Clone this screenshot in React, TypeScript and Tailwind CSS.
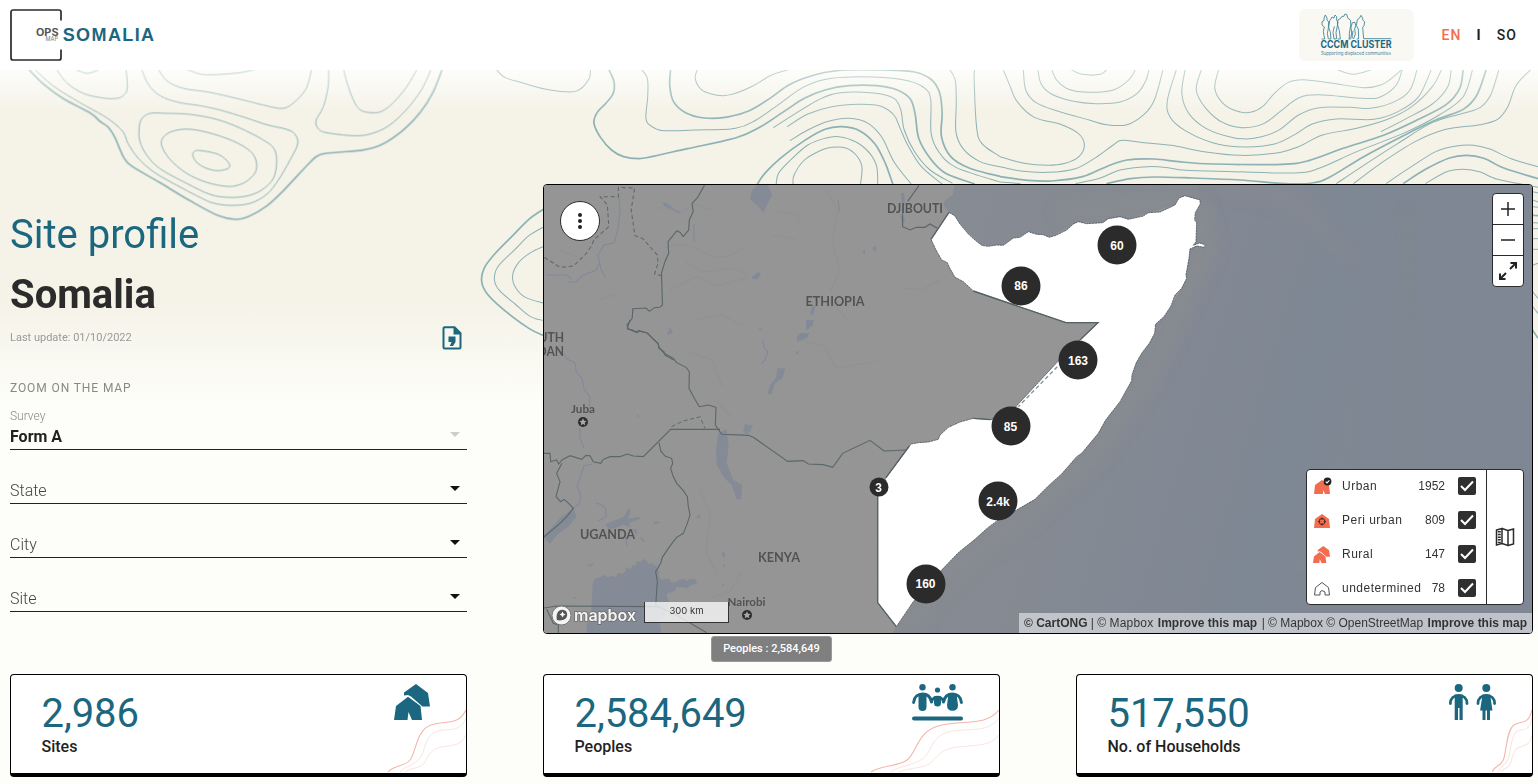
import React from "react";

/* Turns "x,y x,y ..." into a smooth path (Catmull-Rom to Bezier). */
function smooth(points: string): string {
  const p = points.trim().split(/\s+/).map((s) => s.split(",").map(Number));
  const closed = p.length > 2 && p[0][0] === p[p.length - 1][0] && p[0][1] === p[p.length - 1][1];
  let d = `M${p[0][0]} ${p[0][1]}`;
  for (let i = 0; i < p.length - 1; i++) {
    const a = p[i - 1] ?? (closed ? p[p.length - 2] : p[i]);
    const b = p[i];
    const c = p[i + 1];
    const e = p[i + 2] ?? (closed ? p[1] : c);
    d += `C${b[0] + (c[0] - a[0]) / 6} ${b[1] + (c[1] - a[1]) / 6} ${c[0] - (e[0] - b[0]) / 6} ${c[1] - (e[1] - b[1]) / 6} ${c[0]} ${c[1]}`;
  }
  return d;
}

type Line = [string, number];

const westLines: Line[] = [
  ["84,206 130,252 190,296 272,340 300,364 325,382 345,413 370,470 395,498 480,548 570,602 655,647 708,658 745,650 800,618 850,572 930,487 960,464 1010,457 1090,450 1145,434 1210,390 1260,338 1300,275 1327,206", 5],
  ["102,206 160,258 240,308 310,347 350,376 372,400 385,432 415,475 460,515 520,550 600,592 640,609 690,616 750,610 800,583 835,540 870,480 893,432 885,403 860,388 800,374 740,354 660,330 600,317 535,307 480,287 445,253 424,206", 3],
  ["168,206 200,248 250,280 310,294 350,295 372,285 382,262 378,206", 3],
  ["230,210 262,220 295,210", 3],
  ["474,206 500,242 550,265 630,277 730,300 790,315 850,325 890,300 920,262 935,206", 3],
  ["560,208 600,222 640,224 720,218 765,208", 3],
  ["986,206 984,262 970,320 948,362 955,386 980,398 1060,407 1110,402 1165,378 1220,328 1265,268 1294,206", 3],
  ["1030,206 1044,258 1065,310 1085,332 1115,338 1145,334 1180,308 1220,260 1252,206", 3],
  ["417,390 424,358 450,340 500,340 570,343 650,358 720,384 790,420 822,446 830,485 820,535 785,570 740,588 685,592 630,583 560,550 480,506 440,465 420,425 417,390", 3],
  ["484,432 500,402 545,388 600,392 680,415 740,445 766,475 768,512 745,540 715,555 680,559 620,547 560,520 510,478 484,432", 3],
  ["578,465 585,453 605,452 655,463 685,487 686,504 655,512 620,505 590,487 578,465", 3],
];

const centerLines: Line[] = [
  ["430,24 447,65 445,100 425,128 398,158 389,190 408,232 440,270 475,290 520,296 560,289 660,266 800,234 870,202 940,155 1000,115 1060,90 1130,77 1210,77 1270,90 1308,118 1322,165 1332,235 1365,295 1410,340 1495,372", 5],
  ["612,24 609,75 620,125 655,158 710,174 770,172 840,152 900,115 960,72 1040,42 1120,30 1230,30 1320,36 1370,60 1393,100 1400,160 1398,230 1425,290 1480,325 1568,349", 5],
  ["103,26 130,52 180,68 250,88 300,95 342,92 374,58 379,26", 3],
  ["525,26 544,55 545,110 540,175 555,198 590,212 680,210 800,205 860,180 930,130 1000,80 1080,55 1200,51 1300,62 1350,85 1367,120 1368,220 1390,275 1440,322 1568,366", 3],
  ["690,26 683,55 700,88 730,102 765,107 800,100 850,78 905,45 960,27", 3],
  ["910,203 960,170 1040,120 1100,99 1200,99 1260,115 1280,150 1290,210 1320,275 1365,330 1430,370", 3],
  ["950,200 1010,162 1080,140 1160,133 1220,138 1260,165 1278,205 1300,255 1340,320 1400,372", 3],
  ["958,242 1010,210 1070,184 1130,175 1185,190 1225,232 1260,305 1310,372", 3],
  ["863,373 885,340 930,295 1000,242 1060,208 1110,200 1160,212 1205,252 1235,310 1257,373", 5],
  ["918,373 925,340 960,300 1010,255 1060,235 1100,230 1150,246 1190,280 1210,320 1213,373", 3],
  ["967,373 970,345 1000,300 1050,270 1080,262 1120,264 1150,285 1167,320 1163,373", 3],
  ["1420,26 1438,60 1441,130 1440,215 1460,265 1510,305 1568,320", 3],
  ["1495,26 1493,60 1500,200 1515,250 1568,290", 3],
  ["245,446 200,478 150,530 100,583 70,625 63,665 80,703 130,752 200,805 245,828", 5],
  ["245,500 200,527 160,568 110,620 100,660 115,692 160,732 205,770 245,782", 3],
  ["245,558 205,578 170,608 153,645 160,680 190,712 245,730", 3],
];

const eastLines: Line[] = [
  ["8,206 28,255 50,305 100,352 180,374 230,402 246,436 230,470 190,490 140,496 70,490 0,470", 3],
  ["68,206 75,270 105,308 170,334 260,360 310,374 370,374 420,343 450,300 476,206", 3],
  ["110,206 120,252 150,282 210,303 280,311 350,306 400,280 425,242 435,206", 3],
  ["150,206 165,240 200,268 260,277 330,270 375,240 396,206", 3],
  ["205,208 240,223 292,223 312,208", 3],
  ["0,500 60,513 140,517 220,506 280,472 330,435 355,421 420,428 500,436 600,456 700,466 800,460 870,440 940,405 1040,385 1130,358 1200,320 1260,260 1288,206", 3],
  ["0,530 80,541 150,543 240,530 310,500 370,480 450,477 520,485 620,492 820,493 900,482 1000,445 1120,405 1220,358 1300,314 1340,265 1350,206", 5],
  ["0,546 60,551", 3],
  ["220,551 290,535 350,510 430,500 490,503 540,511 680,515 860,519 930,505 1040,455 1180,398 1280,345 1350,290 1378,206", 3],
  ["310,551 380,536 450,531 560,534 700,540 830,551 910,549 960,532 1060,470 1170,410 1270,360 1350,328 1390,285 1418,206", 5],
  ["515,206 488,300 495,350 540,392 620,428 710,441 800,432 860,403 910,372 980,357 1090,358 1160,335 1220,290 1258,206", 3],
  ["540,206 530,280 550,340 600,385 680,413 740,415 810,392 870,345 930,323 1020,322 1080,325 1150,305 1195,270 1216,206", 3],
  ["588,206 572,270 600,325 650,368 710,383 770,370 820,332 870,294 930,284 1060,295 1110,290 1155,255 1173,206", 3],
  ["638,206 626,265 650,310 690,333 730,337 765,320 800,280 840,247 885,239 970,250 1060,263 1110,255 1145,232 1173,206", 3],
  ["980,208 1030,223 1085,208", 3],
  ["1315,206 1305,260 1260,312 1180,358 1110,395", 3],
  ["980,551 1060,496 1160,430 1260,368 1350,340 1400,322 1430,285 1455,206", 3],
  ["1030,551 1110,490 1210,425 1300,388 1400,374 1450,358 1480,320 1505,255 1550,206", 3],
  ["1125,551 1190,506 1270,455 1330,438 1380,436 1430,448 1490,476 1568,500", 3],
  ["1175,551 1240,508 1310,474 1360,466 1410,475 1470,505 1568,536", 5],
  ["1240,551 1300,516 1350,508 1400,516 1450,538 1568,562", 3],
  ["1552,575 1568,579", 3],
  ["1552,600 1568,606", 3],
  ["1552,620 1568,622", 3],
  ["1552,646 1568,647", 5],
  ["1552,668 1568,669", 3],
  ["1552,686 1568,686", 3],
  ["1552,716 1568,716", 3],
  ["1552,748 1568,748", 3],
  ["1552,796 1568,790", 3],
  ["1552,875 1568,895", 3],
  ["1552,920 1568,940", 3],
  ["1552,990 1568,1015", 5],
];

function Contours() {
  const groups: [Line[], string][] = [
    [westLines, "scale(.33333)"],
    [centerLines, "translate(460 60) scale(.34439 .33333)"],
    [eastLines, "translate(1000 0) scale(.34311 .33333)"],
  ];
  return (
    <svg className="absolute left-0 top-0 h-[784px] w-[1538px]" viewBox="0 0 1538 784" fill="none">
      <defs>
        <linearGradient id="fade" gradientUnits="userSpaceOnUse" x1="0" y1="70" x2="0" y2="125">
          <stop offset="0" stopColor="#fff" stopOpacity=".5" />
          <stop offset="1" stopColor="#fff" />
        </linearGradient>
        <mask id="soft" maskUnits="userSpaceOnUse" x="0" y="70" width="1538" height="714">
          <rect x="0" y="70" width="1538" height="714" fill="url(#fade)" />
        </mask>
      </defs>
      <g mask="url(#soft)" stroke="#8db1b5">
        {groups.map(([lines, transform]) => (
          <g key={transform} transform={transform}>
            {lines.map(([pts, w]) => (
              <path key={pts} d={smooth(pts)} strokeWidth={w} />
            ))}
          </g>
        ))}
      </g>
    </svg>
  );
}

const somalia =
  "267,97 285,108 300,132 325,162 345,180 365,196 385,199 410,195 430,196 460,174 480,172 505,155 530,163 550,164 568,172 590,165 620,150 640,132 655,125 680,131 728,128 745,116 780,110 805,118 850,108 865,98 900,96 945,75 957,54 975,47 1020,60 1021,72 1006,98 1004,120 1010,128 1008,185 1000,196 1018,189 1036,194 1032,202 1010,198 990,207 987,235 978,285 980,295 965,325 945,345 933,378 912,410 887,432 884,460 868,490 845,520 828,550 816,585 815,602 780,665 737,720 715,760 665,820 650,830 605,882 565,918 525,958 470,990 412,1022 380,1046 345,1078 295,1118 245,1170 160,1265 109,1340 53,1268 53,945 78,893 153,792 175,788 205,786 235,778 240,765 265,742 300,726 340,715 392,719 450,700 475,672 590,548 660,480 714,428 618,428 340,333 310,305 285,292 268,262 262,248 245,240 228,210 213,178";

const sea =
  "283,0 283,20 278,45 255,60 250,75 267,97 285,108 300,132 365,196 430,196 505,155 568,172 655,125 728,128 805,118 865,98 945,75 975,47 1020,60 1006,98 1010,128 1008,185 990,207 978,285 965,325 933,378 887,432 868,490 828,550 815,602 737,720 665,820 565,918 470,990 380,1046 295,1118 245,1170 160,1265 109,1340 90,1370 2100,1370 2100,0";

function MapDrawing() {
  return (
    <svg className="absolute inset-0 h-full w-full" viewBox="544 185 988 448" preserveAspectRatio="none">
      <defs>
        <linearGradient id="sea" x1="0" y1="0.3" x2="1" y2="0.5">
          <stop offset="0" stopColor="#878b92" />
          <stop offset=".42" stopColor="#838993" />
          <stop offset=".62" stopColor="#7e8794" />
          <stop offset="1" stopColor="#7e8793" />
        </linearGradient>
        <filter id="haze" x="-30%" y="-30%" width="160%" height="160%">
          <feGaussianBlur stdDeviation="22" />
        </filter>
        <clipPath id="seaClip">
          <polygon points={sea} />
        </clipPath>
      </defs>
      <rect x="544" y="185" width="988" height="448" fill="#959595" />

      {/* relief */}
      <g fill="none" stroke="#8e8e8e" strokeWidth="1.6" opacity=".4" strokeLinecap="round">
        <path d="M660 208l22 4 12-8 18 6M665 248q20-8 38 4t40-4M686 262l18 10 30-4 16 8M670 290l28-14 18 10 30-8M696 320l26-6 20 12M826 190l12 20-6 30 8 30-10 22M800 340l24 6 12 22 40-6M830 300l16 18M905 288l16 2 20-10M690 352l22 8 10 26M716 400l14 16M700 490l10 24-4 40 12 20M742 572l-12 20-20 6M772 235l24 4M776 212l20 2 6 12M560 250l20 8M600 300l16-6" />
      </g>

      <g transform="translate(860 180) scale(.33333)">
        <polygon points={sea} fill="url(#sea)" />
        <g clipPath="url(#seaClip)">
          <polyline points="600,100 1000,60 1040,200 950,400 850,600 700,820 500,1000 300,1150 120,1350" fill="none" stroke="#898b90" strokeWidth="60" filter="url(#haze)" opacity=".8" />
          <polyline points="1060,0 1300,60 1500,260" fill="none" stroke="#898b90" strokeWidth="50" filter="url(#haze)" opacity=".45" />
          <polyline points="1480,620 1440,900 1300,1200" fill="none" stroke="#858b90" strokeWidth="60" filter="url(#haze)" opacity=".25" />
          <polyline points="1640,100 1620,500 1660,860" fill="none" stroke="#84898f" strokeWidth="60" filter="url(#haze)" opacity=".3" />
        </g>
      </g>

      {/* lakes and rivers */}
      <g fill="#858b96">
        <path d="M752 190l6-5h10l4 10-5 10-4 8-4-6-9-8zM670 327l-3 8 6-2z" />
        <g transform="translate(540 320) scale(.33333)">
          <path d="M535 340L560 328 566 380 560 430 580 480 607 495 603 538 590 538 575 495 550 470 530 435 528 390zM610 335l5-25 12 8 12-6-8 22-12 8zM712 145l24 0-8 30-22 14-12 34-12 0 8-28 18-22zM770 50l12-12 26 4-14 14-22 10zM808 0l14 0-6 22-10-4zM768 94l8 0-2 10-6-2z" />
          <path d="M10 650L60 595 100 565 110 590 85 620 50 645 30 672z" />
          <path d="M158 790l6-14 18-4 8-8 14 8 12-6 10 6 8-14 14 4 10-12-4-8 16 6 10-14 8 4 2-14 12 2 8-10 10 6 4 10 12-2 6 8 8-6 0 14 8 8-2 14 8 12 10-4 14 0 6 10 10 2 14-8 14-4 8 8 10-8 16 2 6 12-20 6-10 8-18-2-14-2-6 14-22 6-2 8 8 18-10 38-20 16 10 70H160l-12-24-10-16 4-20 10-12 2-26z" />
          <path d="M196 612l30-12 24-8 16-28 6 12-8 20 36-6-2 8-30 10 2 14-20-8-30 12-14 2zM275 626l14 2 4 16-8-4zM340 606l16-2 4 6-16 2zM470 590l8-8 4 8-8 6zM544 700l10-4 2 14-8 2zM290 282l10 8-8 0zM140 736l24-8-14 12zM96 836l14-8-4 8zM548 732l6 0 0 16zM655 24l12 2-6 8zM300 650l10 6 4 10-8-2zM545 790l8 2-2 10z" />
        </g>
      </g>
      <g fill="none" stroke="#828998" strokeWidth="1.1">
        <path d="M619 197l1 14-2 18-4 14-10 2-6 10 3 14 4 8M600 262l-4 8-14 6-6 6-8 0M546 275l20 0 6 4M668 204l6 6 6 3M694 224l0 18M563 353l4 6 8 4 1 8 6 8 2 10 6 8-1 16M580 428l0 10 4 10M592 464l-8 2-4 12-3 8 4 10-2 8-8 6M596 503l6 2 4 4 0 8-8 4M625 536l2 10M763 340l1 8 4 4-3 8-4 4M838 200l2 12" />
      </g>
      <g fill="#828998">
        <path d="M663 202l3 1 6 7-4-2-4-2zM752 277l6-5 3 2-3 5-6 0zM862 253l3-4 0 5zM872 248l4-2 0 6zM901 193l3 0 1 12-3 2zM900 215l5 3-2 8zM812 306l4-1-3 10-3-1zM806 320l4 0 0 8-4 2zM797 337l5-3 7-1-2 5-9 2z" />
      </g>

      {/* borders */}
      <g fill="none" stroke="#5b676a" strokeWidth="3.3">
        <g transform="translate(460 60) scale(.34439 .33333)">
          <path d="M710 376L690 412 674 430 677 455 666 480 664 510 648 530 640 518 630 512 604 545 606 580 595 605 585 640 588 735 580 742 564 743 550 754 540 744 502 746 500 775 485 795 488 808 500 809 510 815 520 812 545 820 560 836 575 850 578 865 592 875 595 885 620 900" />
          <path d="M1333 376L1300 424M1285 458L1285 500 1307 510 1325 502 1350 502 1365 492 1386 505" />
          <path strokeDasharray="12 8" strokeWidth="3" d="M245 592L290 622 330 618 365 582 380 560 390 538 432 500 428 435 407 410 460 410 460 382 507 384 497 450 508 527 530 535 573 585 575 610 565 642 588 648" />
        </g>
        <g transform="translate(540 320) scale(.33333)">
          <path d="M270 0L262 25 290 38 300 34 320 38 355 72 357 82 372 100 400 115 410 128 438 142 448 155 447 205 463 235 478 260 505 255 528 262 526 315 545 343 625 346 640 352 743 424 790 422 805 432 850 434 878 442 908 400 990 361 1032 393 1100 390" />
          <path d="M0 395L14 400 30 400 32 425 50 420 56 432 66 420 90 407 125 418 138 406 150 407 160 425 182 430 190 418 210 410 240 410 262 402 280 408 310 410 392 328 540 328" />
          <path d="M357 368L362 392 375 408 395 415 398 430 392 445 398 465 410 490 430 512 442 530 445 560 450 585 442 610 430 640 410 652 400 665 385 685 367 712 362 730 347 755 352 785 347 858M0 866L50 858 355 860 400 880 500 938M20 868L40 910 55 915 55 940" />
          <path d="M66 430L50 460 60 485 48 530 62 545 72 538 86 550 100 565 80 590 60 610 10 652" />
          <path strokeDasharray="12 8" strokeWidth="3" d="M395 320L430 303 482 290M484 300L495 325" />
        </g>
      </g>

      {/* highlighted country */}
      <g transform="translate(860 180) scale(.33333)">
        <polygon points={somalia} fill="#fff" stroke="#4f5c60" strokeWidth="2.6" strokeDasharray="7 1.5" />
        <path d="M213 178L267 97M53 1268V945M340 333L618 428H714L660 480M392 719L340 715M78 893L148 798M53 1268L109 1340" stroke="#566266" strokeWidth="4" fill="none" />
        <path d="M592 560L475 680" stroke="#7f9299" strokeWidth="4" strokeDasharray="12 8" fill="none" />
      </g>

      <g className="font-[Lato] font-bold" fill="#525252" fontSize="13.6" textAnchor="middle" stroke="#9a9a9a" strokeWidth=".6" paintOrder="stroke">
        <text x="915" y="213" textLength="56" lengthAdjust="spacingAndGlyphs">DJIBOUTI</text>
        <text x="835" y="305.500" textLength="59" lengthAdjust="spacingAndGlyphs">ETHIOPIA</text>
        <text x="607.500" y="539" textLength="55" lengthAdjust="spacingAndGlyphs">UGANDA</text>
        <text x="779" y="562" textLength="42" lengthAdjust="spacingAndGlyphs">KENYA</text>
        <text x="564" y="341.500" textAnchor="end" textLength="42" lengthAdjust="spacingAndGlyphs">SOUTH</text>
        <text x="564" y="356" textAnchor="end" textLength="42" lengthAdjust="spacingAndGlyphs">SUDAN</text>
        <text x="583" y="413" fontSize="12" textLength="24" lengthAdjust="spacingAndGlyphs">Juba</text>
        <text x="746.500" y="606" fontSize="12" textLength="38" lengthAdjust="spacingAndGlyphs">Nairobi</text>
      </g>
      {[[583, 422], [747, 615]].map(([x, y]) => (
        <g key={x} transform={`translate(${x} ${y})`}>
          <circle r="5" fill="#2e2e2e" />
          <path d="M0-3.700L1.100-1.200 3.600-1 1.700.8 2.300 3.300 0 2-2.300 3.300-1.700.8-3.600-1-1.100-1.200z" fill="#aaa" />
        </g>
      ))}

      {/* mapbox mark */}
      <g transform="translate(561.500 615.500)">
        <circle r="9.500" fill="#f4f4f4" stroke="#777" strokeWidth="1" />
        <path d="M-4.600 4.600C-5.500 0-4.500-5.700 1-5.700a5 5 0 0 1 4.700 4.700C5.700 4.500 0 5.500-4.600 4.600z" fill="#555" />
        <path d="M1-4l1 2 2 1-2 1-1 2-1-2-2-1 2-1z" fill="#fff" />
      </g>
      <text x="574" y="620.500" className="font-[Inter] font-semibold" fontSize="16" fill="#f4f4f4" stroke="#6d6d6d" strokeWidth="1.6" paintOrder="stroke" textLength="62">mapbox</text>
    </svg>
  );
}

const clusters = [
  { n: "60", x: 1117, y: 245, big: true },
  { n: "86", x: 1021, y: 285.5, big: true },
  { n: "163", x: 1078, y: 360, big: true },
  { n: "85", x: 1010.5, y: 426, big: true },
  { n: "3", x: 878.5, y: 487, big: false },
  { n: "2.4k", x: 998, y: 501, big: true },
  { n: "160", x: 925.5, y: 583.5, big: true },
];

function TentPair({ className, fill }: { className: string; fill: string }) {
  return (
    <svg className={className} viewBox="0 0 36 36" fill={fill}>
      <path d="M10 11.500V8.500L22 0 34 9 36 22.500H28.500L17 12.500 14 11z" />
      <path d="M2 22L14 12.800 26.500 22 28 36H18L14.500 28 13.500 36H0z" />
    </svg>
  );
}

function LegendIcon({ kind }: { kind: string }) {
  if (kind === "Rural") return <TentPair className="h-[17px] w-[17px]" fill="#f26d50" />;
  return (
    <svg className="h-[18px] w-[18px] overflow-visible" viewBox="0 0 18 18">
      {kind === "undetermined" ? (
        <path d="M2.500 8.500L9 3.500l6.500 5L16.500 16H12V13L9 11.500 7 13v3H1.500z" fill="none" stroke="#555" strokeWidth="1" />
      ) : (
        <path d="M2 8L9 3l7 5 1 9H12l-2-4v4H1z" fill="#f26d50" />
      )}
      {kind === "Urban" && (
        <g>
          <circle cx="14.500" cy="4.500" r="3.900" fill="#222" />
          <path d="M12.700 4.600l1.300 1.300 2.400-2.600" stroke="#fff" strokeWidth="1.100" fill="none" />
        </g>
      )}
      {kind === "Peri urban" && (
        <g>
          <path d="M9 12l1 5h2V13z" fill="#f26d50" />
          <circle cx="9" cy="10.500" r="3" fill="#f26d50" stroke="#3a2a28" strokeWidth="1" />
          <path d="M9 6.500v3M9 11.500v3M5 10.500h3M10 10.500h3" stroke="#3a2a28" strokeWidth=".9" />
          <circle cx="9" cy="10.500" r="1.700" fill="#f26d50" />
        </g>
      )}
    </svg>
  );
}

const legend = [
  { label: "Urban", count: "1952" },
  { label: "Peri urban", count: "809" },
  { label: "Rural", count: "147" },
  { label: "undetermined", count: "78" },
];

function MapPanel() {
  return (
    <div className="relative col-span-2 h-[450px] overflow-hidden rounded-[4px] border border-black font-['Liberation_Sans',sans-serif]">
      <MapDrawing />
      {clusters.map((c) => (
        <div
          key={c.n}
          className={`absolute flex -translate-x-1/2 -translate-y-1/2 items-center justify-center rounded-full bg-[#2b2b2b] text-[12px] font-bold text-white ${c.big ? "size-[39px]" : "size-[19px]"}`}
          style={{ left: c.x - 544, top: c.y - 185 }}
        >
          {c.n}
        </div>
      ))}

      <button className="absolute left-[16px] top-[16px] flex size-[40px] flex-col items-center justify-center gap-[2px] rounded-full border border-[#2b2b2b] bg-white">
        <span className="size-[4px] rounded-full bg-[#222]" />
        <span className="size-[4px] rounded-full bg-[#222]" />
        <span className="size-[4px] rounded-full bg-[#222]" />
      </button>

      <div className="absolute right-[8px] top-[8px] flex w-[32px] flex-col divide-y divide-[#2b2b2b] rounded-[4px] border border-[#2b2b2b] bg-white">
        {["M9 2v14M2 9h14", "M2 9h14"].map((d) => (
          <div key={d} className="flex h-[31px] items-center justify-center">
            <svg className="size-[18px]" viewBox="0 0 18 18">
              <path d={d} stroke="#222" strokeWidth="1.500" />
            </svg>
          </div>
        ))}
        <div className="flex h-[30px] items-center justify-center">
          <svg className="size-[20px]" viewBox="0 0 20 20" fill="none" stroke="#222" strokeWidth="2">
            <path d="M12 8l6-6M12.500 2H18v5.500M8 12l-6 6M2 12.500v5.500h5.500" />
          </svg>
        </div>
      </div>

      <div className="absolute bottom-[28px] right-[8px] flex h-[136px] w-[218px] rounded-[4px] border border-[#2b2b2b] bg-white text-[12px] text-[#333]">
        <div className="-mt-px flex w-[179px] flex-col">
          {legend.map((l) => (
            <div key={l.label} className="flex h-[34px] shrink-0 items-center pl-[6px] pr-[10px]">
              <LegendIcon kind={l.label} />
              <span className={`${l.label === "Rural" ? "ml-[12px]" : "ml-[11px]"} flex-1 tracking-[0.5px]`}>{l.label}</span>
              <span className="mr-[13px]">{l.count}</span>
              <span className="flex size-[18px] items-center justify-center rounded-[2px] bg-[#2f2f2f]">
                <svg className="size-[16px]" viewBox="0 0 16 16" fill="none" stroke="#fff" strokeWidth="2">
                  <path d="M2 8l4 4 8-8.500" />
                </svg>
              </span>
            </div>
          ))}
        </div>
        <div className="flex flex-1 items-center justify-center border-l border-[#2b2b2b]">
          <svg className="size-[20px]" viewBox="0 0 20 20" fill="none" stroke="#2b2b2b" strokeWidth="1.500">
            <path d="M1.500 3l5.500-1.500v15L1.500 18zM7 1.500L13 3.500v15L7 16.500M13 3.500L18.500 2v15L13 18.500" />
            <path d="M4.300 4v12" strokeWidth="3" strokeDasharray="1.500 1.200" />
          </svg>
        </div>
      </div>

      <div className="absolute bottom-[10px] left-[100px] flex h-[21px] w-[85px] items-center justify-center border border-t-0 border-[#333] bg-white/75 pb-px font-[Inter] text-[9.500px] text-[#333]">
        300 km
      </div>

      <div className="absolute bottom-0 right-0 flex h-[20px] w-[513px] items-center justify-between whitespace-pre bg-white/50 px-[5px] text-[12px] text-black/75">
        <span><b>© CartONG</b> | © <span className="tracking-[0.2px]">Mapbox</span></span>
        <b>Improve this map</b>
        <span>| © Mapbox © OpenStreetMap</span>
        <b>Improve this map</b>
      </div>
    </div>
  );
}

function Select({ label, value }: { label: string; value?: string }) {
  return (
    <div className="flex h-[54px] flex-col justify-end border-b border-[#222]">
      {value && <span className="text-[12px] font-light leading-[14px] text-[#888]">{label}</span>}
      <div className="flex h-[26px] items-center justify-between pr-[7px]">
        {value ? (
          <span className="pt-px text-[16px] font-bold text-[#222]">{value}</span>
        ) : (
          <span className="pt-px text-[16px] font-light text-[#444]">{label}</span>
        )}
        <svg className={`mb-[3px] h-[5px] w-[10px] ${value ? "opacity-20" : ""}`} viewBox="0 0 10 5">
          <path d="M0 0h10L5 5z" fill="#111" />
        </svg>
      </div>
    </div>
  );
}

function PeopleIcon() {
  return (
    <svg className="h-[37px] w-[51px]" viewBox="0 0 51 37" fill="#1b677f">
      <circle cx="10.500" cy="3.300" r="3.200" />
      <circle cx="40.500" cy="3.300" r="3.200" />
      <circle cx="25.500" cy="6" r="2.600" />
      <g fill="none" stroke="#1b677f" strokeLinecap="round">
        <path d="M1.600 18.500C2 13 6 10 10.500 10s8 3 9 8M49.400 18.500C49 13 45 10 40.500 10s-8 3-9 8" strokeWidth="3" />
        <path d="M20 17q1-4 5.500-4t5.500 4" strokeWidth="2.600" />
      </g>
      <path d="M6.500 10h8v13a4 4 0 0 1-8 0zM22 12.500h7V19a3.500 3.500 0 0 1-7 0zM36.500 10h8l1.500 11q0 5.800-5.500 5.800T35 21z" />
      <rect x="0" y="32.500" width="51" height="4" rx="2" />
    </svg>
  );
}

function HouseholdIcon() {
  return (
    <svg className="h-[37px] w-[47px]" viewBox="0 0 47 37" fill="#1b677f">
      <circle cx="9.700" cy="4" r="4" />
      <circle cx="37.300" cy="4" r="4" />
      <g fill="none" stroke="#1b677f" strokeWidth="2.800" strokeLinecap="round">
        <path d="M1.400 19.500c0-5 3.500-8.200 8.300-8.200s8.300 3.200 8.300 8.200M29 19.500c0-5 3.500-8.200 8.300-8.200s8.300 3.200 8.300 8.200" />
      </g>
      <path d="M5.700 10.500h8V36h-3.200V24H9v12H5.700zM33.500 10.500h7.600l2.400 16H41V36h-3V26.500h-1.500V36h-3V26.500h-2.400z" />
    </svg>
  );
}

interface CardProps {
  value: string;
  label: string;
  icon: React.ReactNode;
  waveWidth: string;
}

function StatCard({ value, label, icon, waveWidth }: CardProps) {
  return (
    <div className="relative h-[103px] rounded-[4px] border border-b-4 border-black bg-white pl-[30.500px] pt-[15px]">
      <div className="text-[40px] leading-[47px] tracking-[-0.1px] text-[#1b677f]">{value}</div>
      <div className="text-[16px] font-medium leading-[19px] text-[#222]">{label}</div>
      <div className="absolute right-[36px] top-[9px]">{icon}</div>
      <svg className={`absolute bottom-0 right-0 h-[63px] ${waveWidth}`} viewBox="0 0 78 63" preserveAspectRatio="none" fill="none" stroke="#f5b5a9">
        <path vectorEffect="non-scaling-stroke" d="M0 62C6 55 16 57 22 50S28 20 43 15C58 10 70 16 78 0" strokeWidth="1.100" />
        <path vectorEffect="non-scaling-stroke" d="M12 62C18 55 26 56 32 48S36 25 50 21C62 18 71 23 78 8" opacity=".35" />
        <path vectorEffect="non-scaling-stroke" d="M17 62C24 57 33 59 37 52S43 39 53 37C65 35 73 36 78 25" opacity=".35" />
      </svg>
    </div>
  );
}

export default function App() {
  return (
    <div className="relative flex h-[784px] w-[1538px] flex-col overflow-hidden bg-[#fdfef9] font-[Roboto,sans-serif]">
      <div className="absolute inset-x-0 top-[70px] h-[340px] bg-[linear-gradient(180deg,#fdfdfa_0px,#f8f7f0_22px,#f5f3e8_42px,#f5f3e8_235px,#f8f7ef_275px,#fdfef9_335px)]" />
      <Contours />

      <header className="relative flex h-[70px] shrink-0 items-center justify-between bg-white pl-[10px] pr-[21px]">
        <div className="flex items-center">
          <svg className="h-[52px] w-[52px]" viewBox="0 0 52 52">
            <path d="M51 11.500V3a2 2 0 0 0-2-2H3a2 2 0 0 0-2 2v46a2 2 0 0 0 2 2h46a2 2 0 0 0 2-2v-8.500" fill="none" stroke="#2b2b2b" strokeWidth="1.700" />
            <text x="26" y="26.500" className="font-[Inter] font-bold" fontSize="10" fill="#555" textLength="22.500" lengthAdjust="spacingAndGlyphs">OPS</text>
            <text x="35.500" y="32" className="font-[Inter]" fontSize="5.600" fill="#777" textLength="12.500" lengthAdjust="spacingAndGlyphs">MAP</text>
          </svg>
          <span className="ml-[0.700px] font-['Liberation_Sans',sans-serif] text-[18px] font-bold leading-none tracking-[1.4px] text-[#1b677f]">SOMALIA</span>
        </div>
        <div className="flex items-center text-[14px] font-medium tracking-[1.1px] text-[#222]">
          <svg className="mr-[27px] h-[52px] w-[115px] rounded-[6px] bg-[#f9f8f3] tracking-normal" viewBox="0 0 115 52">
            <g fill="none" stroke="#3f8296" strokeWidth="2.600" strokeLinejoin="round" transform="translate(-8 -9) scale(.33333)">
              <path d="M92 117h9l-4-22 3-14-7-6V65l6-3v-8l4-9 5 9v7l5 4-1 20-3 15 3 17M113 117h7l-2-20-5-15 3-20 4-5 3-6 6 3 3-9 5 5v10l4 8-3 15-3 15 2 18-8 1-3-20 4-18" />
              <path d="M140 117h8l-3-25-6-20 2-12 8-5 4-6h6l2-6h6l4 12 8 6v15l-4 25 0 15M172 117h7l3-18-2-17 4-14 8-1 2 10-3 10 2 15-5 14-5-4 3-20" />
              <path d="M197 117h6l-1-30-6-10 3-18 6-4 5-9 5 9v5l6 5-2 12-4 5 3 34h83" />
            </g>
            <text x="21.500" y="39.300" className="font-[Inter] font-bold" fontSize="10" fill="#1b677f" textLength="71" lengthAdjust="spacingAndGlyphs">CCCM CLUSTER</text>
            <text x="22" y="45.500" className="font-[Inter] font-normal" fontSize="4.600" fill="#3f8296" textLength="70" lengthAdjust="spacingAndGlyphs">Supporting displaced communities</text>
          </svg>
          <span className="text-[#f26d50]">EN</span>
          <span className="mx-[15px] font-bold">I</span>
          <span>SO</span>
        </div>
      </header>

      <main className="relative grid grid-cols-3 gap-x-[76px] gap-y-[40px] pl-[10px] pr-[5px] pt-[114px]">
        <section className="flex h-[450px] flex-col">
          <h1 className="mt-[27px] text-[40px] leading-[48px] text-[#1b677f]">Site profile</h1>
          <h2 className="mt-[12px] text-[40px] font-bold leading-[48px] text-[#2b2b2b]">Somalia</h2>
          <div className="flex items-center justify-between pr-[5px] pt-[7px]">
            <span className="pt-px text-[11px] text-[#999]">Last update: 01/10/2022</span>
            <svg className="h-[24px] w-[20px]" viewBox="0 0 20 24">
              <path d="M2.500 1.200h10l6 6v13.800a1.500 1.500 0 0 1-1.500 1.500H3A1.500 1.500 0 0 1 1.500 21V2.500a1.300 1.300 0 0 1 1-1.300z" fill="none" stroke="#1b677f" strokeWidth="2" />
              <path d="M11.500 1l7.500 7.500h-7.500z" fill="#1b677f" />
              <path d="M6.500 10.500h7v5.500l-2.500 4H7.800l1.700-4h-3z" fill="#1b677f" />
            </svg>
          </div>
          <div className="mt-[30px] text-[12px] leading-[16px] tracking-[0.9px] text-[#888]">ZOOM ON THE MAP</div>
          <div className="flex flex-col">
            <Select label="Survey" value="Form A" />
            <Select label="State" />
            <Select label="City" />
            <Select label="Site" />
          </div>
        </section>
        <MapPanel />
        <StatCard value="2,986" label="Sites" icon={<TentPair className="size-[36px]" fill="#1b677f" />} waveWidth="w-[78px]" />
        <StatCard value="2,584,649" label="Peoples" icon={<PeopleIcon />} waveWidth="w-[128px]" />
        <StatCard value="517,550" label="No. of Households" icon={<HouseholdIcon />} waveWidth="w-[40px]" />
      </main>

      <div className="absolute left-[711px] top-[636px] flex h-[26px] w-[121px] items-center justify-center rounded-[3px] border border-[#999] bg-[#7f7f7f] text-[11px] font-medium text-white">
        Peoples : 2,584,649
      </div>
    </div>
  );
}
